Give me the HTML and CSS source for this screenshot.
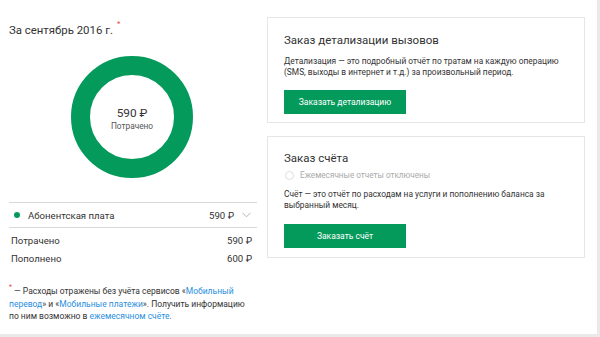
FILE: index.html
```html
<!DOCTYPE html>
<html lang="ru">
<head>
<meta charset="utf-8">
<link rel="stylesheet" href="styles.css">
</head>
<body>
<div class="page">
  <section class="left">
    <h1 class="period">За сентябрь 2016 г.<span class="star">*</span></h1>
    <div class="donut">
      <svg width="122" height="122" viewBox="0 0 122 122">
        <circle cx="61" cy="61" r="51.5" fill="none" stroke="#049a5c" stroke-width="19"/>
      </svg>
      <div class="donut-label">
        <div class="donut-sum">590 ₽</div>
        <div class="donut-cap">Потрачено</div>
      </div>
    </div>
    <div class="service">
      <span class="dot"></span>
      <span class="service-name">Абонентская плата</span>
      <span class="service-sum">590 ₽</span>
      <svg class="chev" width="9" height="6" viewBox="0 0 9 6"><path d="M0.5 0.8 L4.5 4.8 L8.5 0.8" fill="none" stroke="#b5b5b5" stroke-width="1"/></svg>
    </div>
    <div class="totals">
      <div class="total-row"><span>Потрачено</span><span>590 ₽</span></div>
      <div class="total-row"><span>Пополнено</span><span>600 ₽</span></div>
    </div>
    <p class="note"><span class="star">*</span> — Расходы отражены без учёта сервисов «<a href="#">Мобильный перевод</a>» и «<a href="#">Мобильные платежи</a>». Получить информацию по ним возможно в <a href="#">ежемесячном счёте</a>.</p>
  </section>
  <section class="right">
    <div class="card">
      <h2 class="card-title">Заказ детализации вызовов</h2>
      <p class="card-text">Детализация — это подробный отчёт по тратам на каждую операцию (SMS, выходы в интернет и т.д.) за произвольный период.</p>
      <button class="btn">Заказать детализацию</button>
    </div>
    <div class="card card-bill">
      <h2 class="card-title">Заказ счёта</h2>
      <label class="radio"><span class="radio-circle"></span>Ежемесячные отчеты отключены</label>
      <p class="card-text">Счёт — это отчёт по расходам на услуги и пополнению баланса за выбранный месяц.</p>
      <button class="btn">Заказать счёт</button>
    </div>
  </section>
</div>
</body>
</html>
```

FILE: styles.css
```css
html, body {
  margin: 0;
  padding: 0;
}
body {
  background: #e9e9e9;
  font-family: Roboto, "Liberation Sans", Arial, sans-serif;
  color: #333;
  width: 600px;
  height: 337px;
  overflow: hidden;
}
.page {
  width: 597px;
  height: 334px;
  background: #fff;
  display: flex;
  align-items: flex-start;
}
.left {
  width: 248px;
  margin-left: 9px;
}
.period {
  margin: 23px 0 0;
  font-size: 11.4px;
  font-weight: 400;
  line-height: 14px;
  color: #333;
}
.star {
  color: #e8494b;
  font-size: 8px;
  vertical-align: top;
  margin-left: 4px;
  line-height: 8px;
  position: relative;
  top: -3px;
}
.donut {
  position: relative;
  width: 122px;
  height: 122px;
  margin: 19px 0 0 62px;
}
.donut svg {
  display: block;
}
.donut-label {
  position: absolute;
  inset: 0;
  display: flex;
  flex-direction: column;
  align-items: center;
  justify-content: center;
  padding-top: 3px;
}
.donut-sum {
  font-size: 11.8px;
  line-height: 14px;
  color: #333;
}
.donut-cap {
  font-size: 8.3px;
  line-height: 11px;
  color: #555;
  margin-top: 1px;
}
.service {
  margin-top: 24px;
  border-top: 1px solid #d9d9d9;
  border-bottom: 1px solid #d9d9d9;
  height: 24px;
  display: flex;
  align-items: center;
  font-size: 9.6px;
}
.dot {
  width: 6px;
  height: 6px;
  border-radius: 50%;
  background: #049a5c;
  margin-left: 5px;
  margin-right: 8px;
}
.service-name {
  flex: 1;
}
.service-sum {
  margin-right: 8px;
}
.chev {
  margin-right: 6px;
}
.totals {
  padding-top: 4px;
}
.total-row {
  display: flex;
  justify-content: space-between;
  font-size: 9.6px;
  line-height: 18px;
  padding: 0 5px 0 2px;
}
.note {
  margin: 17px 0 0;
  font-size: 8.5px;
  line-height: 12.7px;
  color: #333;
  padding-right: 10px;
}
.note .star {
  margin-left: 0;
  font-size: 7px;
  top: -2px;
}
.note a {
  color: #2b8fe0;
  text-decoration: none;
}
.right {
  margin-left: 10px;
  margin-top: 17px;
  width: 318px;
  display: flex;
  flex-direction: column;
  gap: 13px;
}
.card {
  border: 1px solid #e6e6e6;
  padding: 15px 16px 8px;
}
.card-title {
  margin: 0;
  font-size: 11.5px;
  font-weight: 400;
  line-height: 14px;
  color: #333;
}
.card-text {
  margin: 9px 0 0;
  font-size: 8.4px;
  line-height: 11px;
  color: #333;
}
.btn {
  display: block;
  margin-top: 12px;
  width: 122px;
  height: 24px;
  border: 0;
  background: #049a5c;
  color: #fff;
  font-family: inherit;
  font-size: 8.5px;
  padding: 0;
}
.card-bill {
  padding-top: 14px;
  padding-bottom: 9px;
}
.card-bill .card-text {
  margin-top: 8px;
}
.card-bill .btn {
  margin-top: 13px;
}
.radio {
  display: flex;
  align-items: center;
  margin-top: 5px;
  font-size: 8.2px;
  color: #aaa;
  line-height: 11px;
}
.radio-circle {
  width: 7px;
  height: 7px;
  border: 1px solid #ddd;
  border-radius: 50%;
  margin-left: 1px;
  margin-right: 6px;
}
```
